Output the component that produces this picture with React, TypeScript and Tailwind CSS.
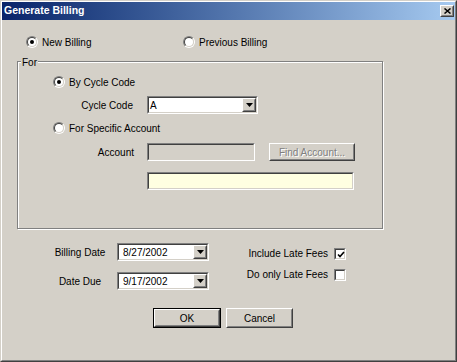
import type { ReactNode } from 'react';

function Sunken({ className = '', inner = 'bg-white', children }: { className?: string; inner?: string; children?: ReactNode }) {
  return (
    <div className={`border border-t-[#808080] border-l-[#808080] border-b-white border-r-white ${className}`}>
      <div className={`h-full w-full border border-t-[#404040] border-l-[#404040] border-b-[#d4d0c8] border-r-[#d4d0c8] ${inner}`}>
        {children}
      </div>
    </div>
  );
}

function Raised({ className = '', children }: { className?: string; children?: ReactNode }) {
  return (
    <div className={`border border-t-white border-l-white border-b-[#404040] border-r-[#404040] bg-[#d4d0c8] ${className}`}>
      <div className="flex h-full w-full items-center justify-center border border-t-[#d4d0c8] border-l-[#d4d0c8] border-b-[#808080] border-r-[#808080]">
        {children}
      </div>
    </div>
  );
}

function Radio({ checked = false, label }: { checked?: boolean; label: string }) {
  return (
    <div className="flex h-[14px] items-center gap-[4px]">
      <div className="h-[12px] w-[12px] rounded-full border border-t-[#808080] border-l-[#808080] border-b-white border-r-white">
        <div className="flex h-full w-full items-center justify-center rounded-full border border-t-[#404040] border-l-[#404040] border-b-[#d4d0c8] border-r-[#d4d0c8] bg-white">
          {checked && <div className="h-[4px] w-[4px] rounded-full bg-black" />}
        </div>
      </div>
      <span>{label}</span>
    </div>
  );
}

function Combo({ value, className = '', pad = 'pl-[4px]' }: { value: string; className?: string; pad?: string }) {
  return (
    <Sunken className={className}>
      <div className="flex h-full items-center">
        <span className={`flex-1 ${pad}`}>{value}</span>
        <Raised className="h-full w-[14px]">
          <svg width="7" height="4" viewBox="0 0 7 4">
            <path d="M0 0h7L3.5 4z" fill="#000" />
          </svg>
        </Raised>
      </div>
    </Sunken>
  );
}

function Check({ checked = false }: { checked?: boolean }) {
  return (
    <Sunken className="h-[12px] w-[12px]">
      {checked && (
        <svg width="8" height="8" viewBox="0 0 8 8" className="m-[1px]">
          <path d="M1 3.5l2 2 4-4.5" stroke="#000" strokeWidth="1.6" fill="none" />
        </svg>
      )}
    </Sunken>
  );
}

export default function App() {
  return (
    <div className="h-[362px] w-[457px] border border-t-[#d4d0c8] border-l-[#d4d0c8] border-b-[#404040] border-r-[#404040] bg-[#d4d0c8] font-['Liberation_Sans',Arial,sans-serif] text-[10px] text-black">
      <div className="flex h-full flex-col border border-t-white border-l-white border-b-[#808080] border-r-[#808080]">
        {/* Title bar */}
        <div className="flex h-[18px] items-center bg-gradient-to-r from-[#0a246a] to-[#a6caf0] pl-[2px] pr-[1px]">
          <span className="flex-1 text-[10.5px] font-bold text-white">Generate Billing</span>
          <Raised className="h-[12px] w-[14px]">
            <svg width="7" height="6" viewBox="0 0 7 6">
              <path d="M0.5 0.5l6 5M6.5 0.5l-6 5" stroke="#000" strokeWidth="1.5" />
            </svg>
          </Raised>
        </div>

        {/* Billing mode */}
        <div className="mt-[15px] flex pl-[24px]">
          <div className="w-[157px]">
            <Radio checked label="New Billing" />
          </div>
          <Radio label="Previous Billing" />
        </div>

        {/* For group */}
        <div className="relative ml-[15px] mt-[12px] h-[168px] w-[366px] border border-[#808080] shadow-[inset_1px_1px_0_#fff,1px_1px_0_#fff]">
          <span className="absolute -top-[7px] left-[3px] bg-[#d4d0c8] px-[1px]">For</span>
          <div className="flex flex-col">
            <div className="ml-[35px] mt-[13px]">
              <Radio checked label="By Cycle Code" />
            </div>
            <div className="mt-[7px] flex h-[18px] items-center">
              <span className="w-[115px] text-right">Cycle Code</span>
              <Combo value="A" className="ml-[14px] h-[18px] w-[111px]" pad="pl-[1px]" />
            </div>
            <div className="ml-[35px] mt-[7px]">
              <Radio label="For Specific Account" />
            </div>
            <div className="mt-[8px] flex h-[18px] items-center">
              <span className="w-[116px] text-right">Account</span>
              <Sunken className="ml-[13px] h-[18px] w-[108px]" inner="bg-[#d4d0c8]" />
              <Raised className="ml-[14px] h-[18px] w-[86px]">
                <span className="text-[#808080] [text-shadow:1px_1px_0_#fff]">Find Account...</span>
              </Raised>
            </div>
            <div className="mt-[11px] flex">
              <Sunken className="ml-[129px] h-[18px] w-[207px]" inner="bg-[#ffffe1]" />
            </div>
          </div>
        </div>

        {/* Dates and fees */}
        <div className="mt-[14px] flex">
          <div className="ml-[51px] flex flex-col">
            <div className="flex h-[18px] items-center">
              <span className="w-[54px] whitespace-nowrap text-center">Billing Date</span>
              <Combo value="8/27/2002" className="ml-[10px] h-[18px] w-[92px]" />
            </div>
            <div className="mt-[11px] flex h-[18px] items-center">
              <span className="w-[54px] whitespace-nowrap text-center">Date Due</span>
              <Combo value="9/17/2002" className="ml-[10px] h-[18px] w-[92px]" />
            </div>
          </div>
          <div className="ml-[36px] mt-[4px] flex flex-col">
            <div className="flex h-[13px] items-center">
              <span className="w-[83px] whitespace-nowrap text-right">Include Late Fees</span>
              <div className="ml-[6px]">
                <Check checked />
              </div>
            </div>
            <div className="mt-[8px] flex h-[13px] items-center">
              <span className="w-[83px] whitespace-nowrap text-right">Do only Late Fees</span>
              <div className="ml-[6px]">
                <Check />
              </div>
            </div>
          </div>
        </div>

        {/* Buttons */}
        <div className="ml-[151px] mt-[18px] flex gap-[5px]">
          <div className="h-[20px] w-[68px] border border-black">
            <Raised className="h-full w-full">
              <span>OK</span>
            </Raised>
          </div>
          <Raised className="h-[20px] w-[67px]">
            <span>Cancel</span>
          </Raised>
        </div>
      </div>
    </div>
  );
}
